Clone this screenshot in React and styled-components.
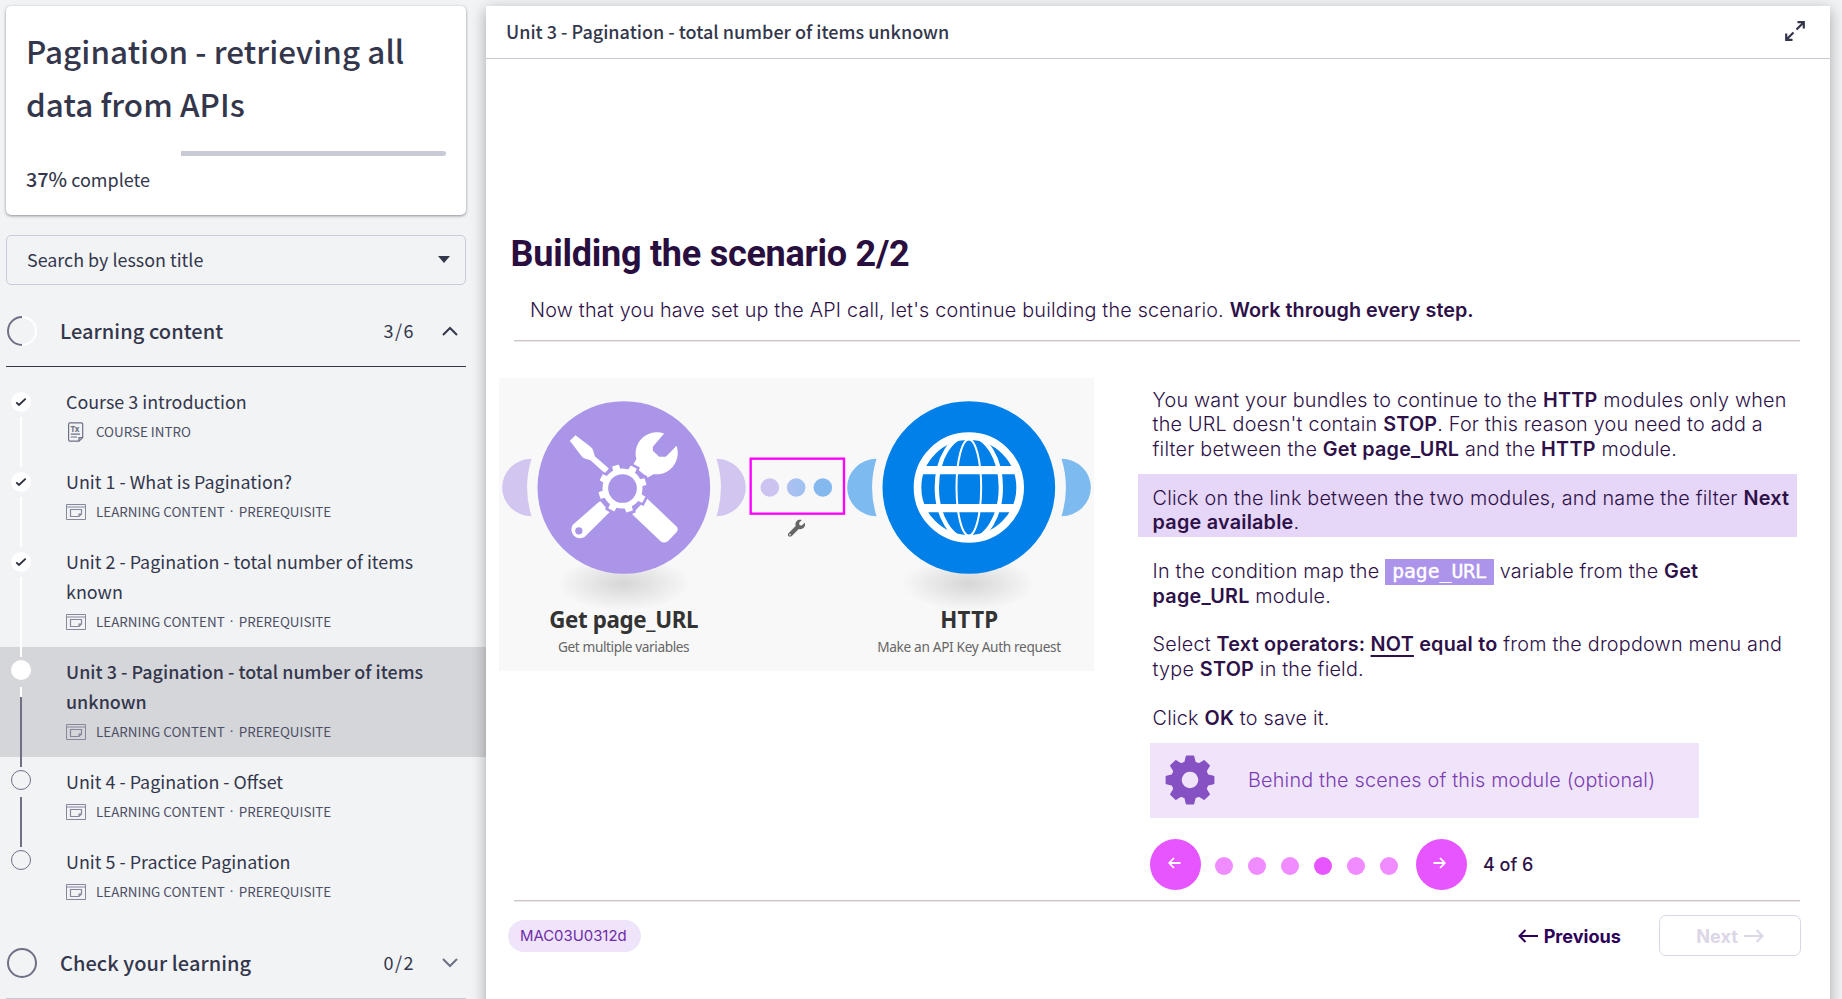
import React from "react";
import styled, { createGlobalStyle } from "styled-components";
import { FaWrench } from "react-icons/fa";

const source = `"Noto Sans CJK SC", "Noto Sans", sans-serif`;
const inter = `Inter, "Liberation Sans", sans-serif`;

const GlobalStyle = createGlobalStyle`
  *, *::before, *::after { box-sizing: border-box; }
  body { margin: 0; background: #f1f3f5; overflow: hidden; }
`;

const Page = styled.div`
  display: flex;
  height: 999px;
  overflow: hidden;
  background: #f1f3f5;
  color: #34374c;
  font-family: ${source};
`;

/* ---------- sidebar ---------- */
const Sidebar = styled.aside`
  width: 486px;
  flex: none;
  padding-top: 6px;
`;

const CourseCard = styled.section`
  width: 460px;
  height: 209px;
  margin-left: 6px;
  padding: 18px 20px 0;
  background: #fff;
  border-radius: 5px;
  box-shadow: 0 1px 3px rgba(40, 42, 60, 0.5);
`;

const CourseTitle = styled.h1`
  margin: 0;
  font-size: 31.4px;
  line-height: 53px;
  font-weight: 500;
  white-space: nowrap;
  letter-spacing: 0.06px;
`;

const Track = styled.div`
  display: flex;
  justify-content: flex-end;
  height: 5px;
  margin-top: 21px;
`;

const Remaining = styled.div`
  width: 265px;
  background: #c8cad5;
  border-radius: 0 3px 3px 0;
`;

const Percent = styled.p`
  margin: 8px 0 0;
  font-size: 18px;
  line-height: 30px;
  b { font-weight: 500; font-size: 19.8px; }
`;

const Search = styled.div`
  display: flex;
  align-items: center;
  justify-content: space-between;
  width: 460px;
  height: 50px;
  margin: 20px 0 11px 6px;
  padding: 0 15px 3px 20px;
  border: 1px solid #c8cad8;
  border-radius: 5px;
  font-size: 17.9px;
`;

const Caret = styled.span`
  margin-top: 2px;
  border: 6px solid transparent;
  border-top: 7px solid #34374c;
  border-bottom: 0;
`;

const SectionHead = styled.header`
  display: flex;
  align-items: center;
  width: 460px;
  height: 71px;
  margin-left: 6px;
  border-bottom: 1px solid ${(p) => (p.$open ? "#34374c" : "#c3c9d5")};
`;

const SectionTitle = styled.h2`
  flex: 1;
  margin: 0 0 0 22px;
  padding-bottom: 2px;
  font-size: 20px;
  font-weight: 500;
  letter-spacing: 0.06px;
`;

const Count = styled.span`
  margin-right: 27px;
  padding-bottom: 2px;
  font-size: 18px;
  letter-spacing: 1.5px;
`;

const Lessons = styled.ul`
  margin: 0;
  padding: 10px 0 11px;
  list-style: none;
`;

const Lesson = styled.li`
  display: flex;
  padding: 10px 0 0 11px;
  height: ${(p) => (p.$tall ? 110 : 80)}px;
  background: ${(p) => (p.$active ? "#d5d6da" : "transparent")};
`;

const Rail = styled.div`
  display: flex;
  flex-direction: column;
  align-items: center;
  width: 20px;
  margin-right: 35px;
  margin-bottom: -10px;
  padding-top: ${(p) => (p.$done ? 5 : 3)}px;
`;

const Bullet = styled.span`
  display: flex;
  align-items: center;
  justify-content: center;
  flex: none;
  width: 20px;
  height: 20px;
  border-radius: 50%;
  background: ${(p) => (p.$filled ? "#fff" : "transparent")};
  border: ${(p) => (p.$filled ? "0" : "1px solid #6e7185")};
`;

const Line = styled.span`
  flex: 1;
  width: 2px;
  margin-top: ${(p) => (p.$done ? 5 : 7)}px;
  background: ${(p) =>
    p.$kind === "half"
      ? "linear-gradient(#fff 10px, #6e7185 10px)"
      : p.$kind === "open" ? "#6e7185" : "#fff"};
`;

const LessonBody = styled.div`
  margin-top: -1px;
`;

const LessonTitle = styled.div`
  font-size: 17.9px;
  line-height: 30px;
  white-space: nowrap;
  font-weight: ${(p) => (p.$active ? 500 : 400)};
  letter-spacing: ${(p) => (p.$active ? "0.03px" : "0")};
`;

const Meta = styled.div`
  display: flex;
  align-items: center;
  height: 30px;
  font-size: 13.4px;
  color: #4d5065;
  svg { flex: none; margin: 2px 10px 0 0; }
`;

const Separator = styled.span`
  width: 14px;
  text-align: center;
  font-family: "Noto Sans", sans-serif;
`;

/* ---------- content panel ---------- */
const Panel = styled.main`
  position: relative;
  width: 1344px;
  height: 1010px;
  margin-top: 6px;
  background: #fff;
  box-shadow: 0 4px 14px rgba(0, 0, 0, 0.32);
`;

const PanelHead = styled.header`
  display: flex;
  align-items: center;
  justify-content: space-between;
  height: 53px;
  padding: 0 25px 2px 20px;
  border-bottom: 1px solid #c8cad8;
  font-size: 18px;
  font-weight: 500;
`;

const Slide = styled.div`
  padding: 170px 30px 0 0;
  font-family: ${inter};
  color: #2d1148;
  white-space: nowrap;
`;

const SlideTitle = styled.h2`
  margin: 0 0 0 24.5px;
  font-family: Roboto, sans-serif;
  font-size: 36px;
  line-height: 50px;
  font-weight: 700;
  letter-spacing: -0.25px;
  color: #290e40;
`;

const Lead = styled.p`
  margin: 19px 0 18px 44px;
  font-size: 19.8px;
  line-height: 24px;
  font-weight: 300;
  letter-spacing: 0.19px;
  b { font-weight: 600; letter-spacing: 0.05px; }
`;

const Divider = styled.div`
  height: 2px;
  margin-left: 28px;
  background: #ebe6e8;
  border-top: 1px solid #cfc5c9;
`;

const Columns = styled.div`
  display: flex;
  height: 558px;
`;

const Diagram = styled.svg`
  flex: none;
  width: 595px;
  height: 293px;
  margin: 36px 0 0 13px;
`;

const Steps = styled.div`
  flex: none;
  margin: 46px 0 0 44px;
  width: 659px;
`;

const Step = styled.p`
  margin: 0;
  padding: ${(p) => (p.$mark ? "12px 0 2px 14.6px" : "0 0 0 14.6px")};
  margin-top: ${(p) => p.$gap || 0}px;
  background: ${(p) => (p.$mark ? "#e6d6f7" : "transparent")};
  font-size: 19.8px;
  line-height: 24.45px;
  font-weight: 300;
  letter-spacing: 0.2px;
  b { font-weight: 600; letter-spacing: 0.23px; }
  u { text-underline-offset: 4px; text-decoration-thickness: 1.5px; }
`;

const Tag = styled.code`
  display: inline-block;
  height: 26px;
  margin: -5px 0 -4px;
  padding: 0 7px;
  background: #ab94e9;
  color: #fff;
  font: 19.7px/26px "DejaVu Sans Mono", monospace;
  letter-spacing: 0;
  -webkit-text-stroke: 0.4px #fff;
  vertical-align: middle;
`;

const Behind = styled.button`
  display: flex;
  align-items: center;
  width: 549px;
  height: 75px;
  margin: 12.7px 0 0 11.5px;
  padding: 0 0 0 15px;
  border: 0;
  background: #f0e4fa;
  color: #7a3db0;
  font: 300 19.8px ${inter};
  letter-spacing: 0.2px;
  svg { margin-right: 33.5px; }
`;

const Pager = styled.div`
  display: flex;
  align-items: center;
  margin: 21px 0 0 12px;
  font-size: 18px;
  font-weight: 500;
`;

const Round = styled.button`
  display: flex;
  align-items: center;
  justify-content: center;
  width: 51px;
  height: 51px;
  padding: 0 3px 2px 0;
  border: 0;
  border-radius: 50%;
  background: #e655ff;
`;

const Dots = styled.div`
  display: flex;
  gap: 15.2px;
  margin: 3px 17.5px 0 13.5px;
`;

const Dot = styled.span`
  width: 18px;
  height: 18px;
  border-radius: 50%;
  background: ${(p) => (p.$on ? "#e655ff" : "#f08cff")};
`;

const PageNo = styled.span`
  margin-left: 16px;
`;

const Footer = styled.footer`
  display: flex;
  align-items: center;
  height: 41px;
  margin: 13px -1px 0 22px;
`;

const Chip = styled.span`
  width: 133px;
  height: 32px;
  margin-right: auto;
  padding-left: 12px;
  border-radius: 16px;
  background: #f0e4fa;
  color: #6f2da8;
  font-size: 14.9px;
  line-height: 32px;
`;

const Nav = styled.button`
  display: flex;
  align-items: center;
  justify-content: center;
  gap: 6px;
  height: 41px;
  padding: 0;
  border: 0;
  background: none;
  color: #2d0059;
  font: 700 18.1px ${inter};
`;

const NextNav = styled(Nav)`
  width: 142px;
  margin-left: 38px;
  border: 1px solid #dcd6e6;
  border-radius: 7px;
  color: #dcd6e6;
`;

/* ---------- drawings ---------- */
const Check = () => (
  <svg width="12" height="10" viewBox="0 0 12 10" fill="none" stroke="#2b2d3c" strokeWidth="1.8">
    <path d="M1.3 5.4 4 8 10.7 1.6" />
  </svg>
);

const ChevronSvg = styled.svg`
  margin-right: 8px;
`;

const Chevron = ({ up }) => (
  <ChevronSvg width="16" height="10" viewBox="0 0 16 10" fill="none" stroke={up ? "#34374c" : "#6e7185"} strokeWidth="2">
    <path d={up ? "M1 9 8 2 15 9" : "M1 1 8 8 15 1"} />
  </ChevronSvg>
);

const Progress = ({ half }) => (
  <svg width="32" height="32" viewBox="0 0 32 32" fill="none" strokeWidth="2">
    <circle cx="16" cy="16" r="14" stroke={half ? "#fff" : "#6e7185"} />
    {half && <path d="M16 2a14 14 0 0 0 0 28" stroke="#6e7185" />}
  </svg>
);

const TextIcon = () => (
  <svg width="20" height="20" viewBox="0 0 20 20" fill="none" stroke="#6e7185" strokeWidth="1.2">
    <path d="M4 .8H15.3a1.4 1.4 0 0 1 1.4 1.4V15.6L13 19.2H4a1.4 1.4 0 0 1-1.4-1.4V2.2A1.4 1.4 0 0 1 4 .8ZM16.7 15.6H13V19.2M4.8 12.2H14M4.8 15H11" />
    <text x="4.4" y="10" fontSize="8" fontWeight="700" fontFamily="Noto Sans" fill="#6e7185" stroke="none">Tx</text>
  </svg>
);

const ScreenIcon = () => (
  <svg width="20" height="20" viewBox="0 0 20 20" fill="none" stroke="#85889b" strokeWidth="1">
    <path d="M.5 2.5H19.5V17.5H.5ZM.5 5H19.5" />
    <path d="M4.5 7.5H15.5V12L13 14.5H4.5ZM15.5 12H13V14.5" strokeWidth="1.2" />
  </svg>
);

const Arrow = ({ left }) => (
  <svg width="20" height="14" viewBox="0 0 20 14" fill="none" stroke="currentColor" strokeWidth="2">
    <path d={left ? "M20 7H1.5M7.5 1 1.5 7l6 6" : "M0 7H18.5M12.5 1l6 6-6 6"} />
  </svg>
);

const SmallArrow = ({ left }) => (
  <svg width="13" height="12" viewBox="0 0 13 12" fill="none" stroke="#fff" strokeWidth="1.8">
    <path d={left ? "M12.5 6H1.5M6 1 1.2 6 6 11" : "M.5 6H11.5M7 1 11.8 6 7 11"} />
  </svg>
);

const ExpandIcon = () => (
  <svg width="20" height="20" viewBox="0 0 20 20" fill="none" stroke="#34374c" strokeWidth="2.2">
    <path d="M12.5 1.2H18.8V7.5M18.8 1.2 11.5 8.5M7.5 18.8H1.2V12.5M1.2 18.8 8.5 11.5" />
  </svg>
);

const gearPath = (cx, cy, n, r, R, w1, w2, start) => {
  const pts = [];
  for (let i = 0; i < n; i++) {
    const a = start + (i * 2 * Math.PI) / n;
    [[r, -w1], [R, -w2], [R, w2], [r, w1]].forEach(([q, d]) =>
      pts.push(`${(cx + q * Math.cos(a + d)).toFixed(1)} ${(cy + q * Math.sin(a + d)).toFixed(1)}`)
    );
  }
  return `M${pts.join("L")}Z`;
};

const GearIcon = () => (
  <svg width="50" height="50" viewBox="0 0 50 50" fill="#8652c3">
    <path fillRule="evenodd" stroke="#8652c3" strokeWidth="2" strokeLinejoin="round"
      d={gearPath(25, 25, 8, 18, 23.6, 0.27, 0.14, 0) + "M25 15.8a9.2 9.2 0 1 0 .01 0Z"} />
  </svg>
);

const Ears = ({ cx, fill }) => (
  <g fill={fill}>
    <path d={`M${cx - 277} 268A88 86 0 0 0 ${cx - 277} 440A291 291 0 0 1 ${cx - 277} 268Z`} />
    <path d={`M${cx + 278} 268A88 86 0 0 1 ${cx + 278} 440A291 291 0 0 0 ${cx + 278} 268Z`} />
  </g>
);

const Caption = ({ x, title, sub, w1, w2 }) => (
  <g textAnchor="middle" fontFamily="'Noto Sans', 'Open Sans', sans-serif">
    <text x={x} y="775" fontSize="67" fontWeight="700" fill="#333" textLength={w1}>{title}</text>
    <text x={x} y="846" fontSize="41" fill="#666" textLength={w2}>{sub}</text>
  </g>
);

const Scenario = () => (
  <Diagram viewBox="28.5 25.5 1785 879">
    <defs>
      <radialGradient id="shade">
        <stop offset="0" stopColor="#d6d6d6" />
        <stop offset="1" stopColor="#f8f8f8" />
      </radialGradient>
      <linearGradient id="mid"><stop offset="0" stopColor="#adc0f1" /><stop offset="1" stopColor="#9ec2f1" /></linearGradient>
    </defs>
    <rect x="28" y="25" width="1786" height="880" fill="#f8f8f8" />
    <ellipse cx="402" cy="642" rx="200" ry="82" fill="url(#shade)" />
    <ellipse cx="1438" cy="642" rx="200" ry="82" fill="url(#shade)" />
    <Ears cx={403} fill="#d2c5ef" />
    <Ears cx={1438} fill="#7cbaf0" />
    <circle cx="403" cy="354" r="259" fill="#ab95e9" />
    <circle cx="1438" cy="354" r="259" fill="#0080e8" />
    <g fill="#fff">
      <path d="M258 197 303 232Q309 237 311 243L316 260 358 297 346 311 303 272 288 268Q281 266 277 261L241 214Z" />
      <path d="M524 192A64 64 0 0 0 439 262L441 268 430 288 475 324 492 314A64 64 0 0 0 561 229L529 262 509 262 490 244 490 232Z" />
      <path d="M332 394 250 466A26 26 0 0 0 286 502L360 428Z" />
      <path d="M472 386 561 471Q568 479 561 488L535 515Q524 523 514 516L428 434Z" />
      <circle cx="268" cy="484" r="11" fill="#ab95e9" />
      <path d={gearPath(399, 357, 8, 58, 74, 0.2, 0.14, -1.87)} stroke="#ab95e9" strokeWidth="14" />
      <path d={gearPath(399, 357, 8, 58, 73, 0.2, 0.14, -1.87)} />
      <circle cx="399" cy="357" r="60" />
      <circle cx="399" cy="357" r="43" fill="#ab95e9" />
    </g>
    <g fill="none" stroke="#fff">
      <circle cx="1438" cy="354" r="154" strokeWidth="23" />
      <ellipse cx="1438" cy="354" rx="96" ry="156" strokeWidth="13" />
      <ellipse cx="1438" cy="354" rx="37" ry="144" strokeWidth="6" />
      <path d="M1300 302H1576M1300 416H1576" strokeWidth="25" />
    </g>
    <rect x="783.5" y="267.5" width="280" height="165" fill="none" stroke="#ff00ff" strokeWidth="7" />
    <circle cx="841" cy="354" r="28" fill="#ccc3f0" />
    <circle cx="920" cy="354" r="28" fill="url(#mid)" />
    <circle cx="1000" cy="354" r="28" fill="#84b9ef" />
    <FaWrench x="895" y="450" size={52} color="#666" />
    <Caption x={403} title="Get page_URL" sub="Get multiple variables" w1="448" w2="395" />
    <Caption x={1439} title="HTTP" sub="Make an API Key Auth request" w1="174" w2="552" />
  </Diagram>
);

const lessons = [
  { title: ["Course 3 introduction"], meta: "COURSE INTRO", icon: "text", state: "done" },
  { title: ["Unit 1 - What is Pagination?"], state: "done" },
  { title: ["Unit 2 - Pagination - total number of items", "known"], state: "done" },
  { title: ["Unit 3 - Pagination - total number of items", "unknown"], state: "half" },
  { title: ["Unit 4 - Pagination - Offset"], state: "open" },
  { title: ["Unit 5 - Practice Pagination"], state: "open", last: true },
];

export default function App() {
  return (
    <Page>
      <GlobalStyle />
      <Sidebar>
        <CourseCard>
          <CourseTitle>Pagination - retrieving all<br />data from APIs</CourseTitle>
          <Track><Remaining /></Track>
          <Percent><b>37%</b> complete</Percent>
        </CourseCard>
        <Search>Search by lesson title<Caret /></Search>
        <SectionHead $open>
          <Progress half />
          <SectionTitle>Learning content</SectionTitle>
          <Count>3/6</Count>
          <Chevron up />
        </SectionHead>
        <Lessons>
          {lessons.map((l) => (
            <Lesson key={l.title[0]} $tall={l.title.length > 1} $active={l.state === "half"}>
              <Rail $done={l.state === "done"}>
                <Bullet $filled={l.state !== "open"}>{l.state === "done" && <Check />}</Bullet>
                {!l.last && <Line $done={l.state === "done"} $kind={l.state} />}
              </Rail>
              <LessonBody>
                {l.title.map((t) => <LessonTitle key={t} $active={l.state === "half"}>{t}</LessonTitle>)}
                <Meta>
                  {l.icon ? <TextIcon /> : <ScreenIcon />}
                  {l.meta || <><span>LEARNING CONTENT</span><Separator>·</Separator><span>PREREQUISITE</span></>}
                </Meta>
              </LessonBody>
            </Lesson>
          ))}
        </Lessons>
        <SectionHead>
          <Progress />
          <SectionTitle>Check your learning</SectionTitle>
          <Count>0/2</Count>
          <Chevron />
        </SectionHead>
      </Sidebar>
      <Panel>
        <PanelHead>Unit 3 - Pagination - total number of items unknown<ExpandIcon /></PanelHead>
        <Slide>
          <SlideTitle>Building the scenario 2/2</SlideTitle>
          <Lead>Now that you have set up the API call, let's continue building the scenario. <b>Work through every step.</b></Lead>
          <Divider />
          <Columns>
            <Scenario />
            <Steps>
              <Step>
                You want your bundles to continue to the <b>HTTP</b> modules only when<br />
                the URL doesn't contain <b>STOP</b>. For this reason you need to add a<br />
                filter between the <b>Get page_URL</b> and the <b>HTTP</b> module.
              </Step>
              <Step $mark $gap={12.45}>
                Click on the link between the two modules, and name the filter <b>Next</b><br />
                <b>page available</b>.
              </Step>
              <Step $gap={22.45}>
                In the condition map the <Tag>page_URL</Tag> variable from the <b>Get</b><br />
                <b>page_URL</b> module.
              </Step>
              <Step $gap={24.45}>
                Select <b>Text operators: <u>NOT</u> equal to</b> from the dropdown menu and<br />
                type <b>STOP</b> in the field.
              </Step>
              <Step $gap={24.45}>Click <b>OK</b> to save it.</Step>
              <Behind><GearIcon />Behind the scenes of this module (optional)</Behind>
              <Pager>
                <Round aria-label="Back"><SmallArrow left /></Round>
                <Dots>{[1, 2, 3, 4, 5, 6].map((n) => <Dot key={n} $on={n === 4} />)}</Dots>
                <Round aria-label="Forward"><SmallArrow /></Round>
                <PageNo>4 of 6</PageNo>
              </Pager>
            </Steps>
          </Columns>
          <Divider />
          <Footer>
            <Chip>MAC03U0312d</Chip>
            <Nav><Arrow left />Previous</Nav>
            <NextNav>Next<Arrow /></NextNav>
          </Footer>
        </Slide>
      </Panel>
    </Page>
  );
}
